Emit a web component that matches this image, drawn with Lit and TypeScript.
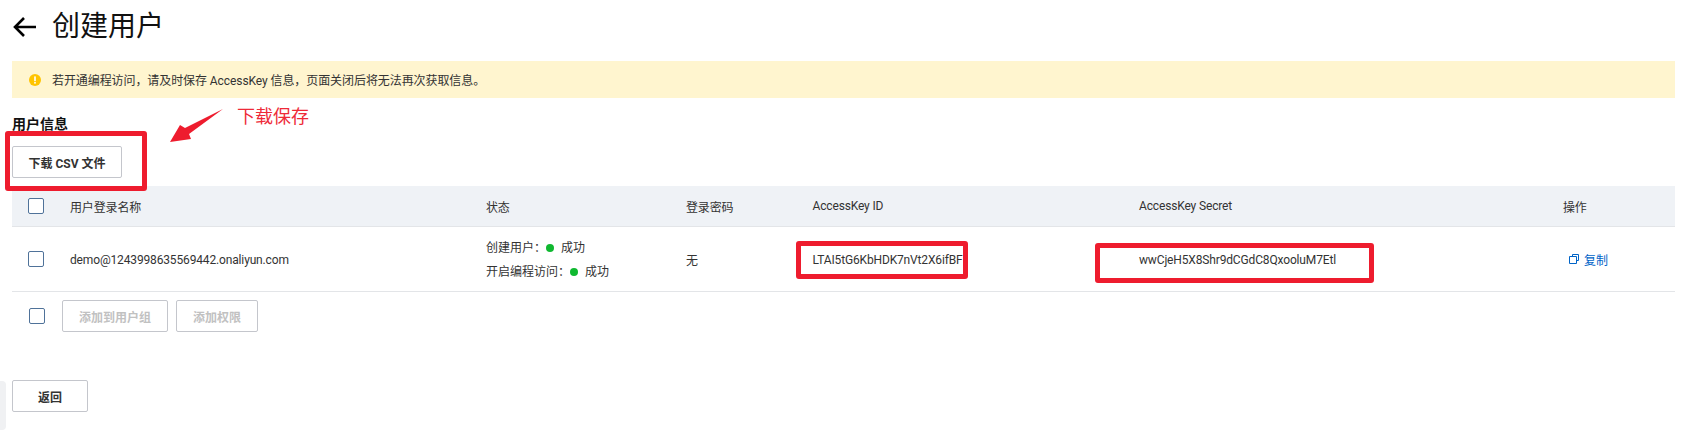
import { LitElement, html, css, svg } from "lit";
import { customElement } from "lit/decorators.js";

const columns = ["用户登录名称", "状态", "登录密码", "AccessKey ID", "AccessKey Secret", "操作"];

@customElement("app-root")
export class AppRoot extends LitElement {
  static styles = css`
    :host {
      display: block;
      position: relative;
      width: 1687px;
      height: 433px;
      overflow: hidden;
      background: #fff;
      color: #333;
      font-family: Roboto, "Noto Sans CJK SC", sans-serif;
      font-size: 12px;
    }
    .page { padding: 0 12px; display: flex; flex-direction: column; }
    .head { height: 54px; display: flex; align-items: center; gap: 16px; }
    .head svg { display: block; }
    .head h1 { margin: 0; font-size: 28px; font-weight: 400; color: #111; line-height: 40px; }
    .banner {
      margin-top: 7px; height: 37px; background: #fff5cf; letter-spacing: -0.08px;
      display: flex; align-items: center; gap: 11px; padding-left: 17px;
    }
    .banner svg { display: block; }
    h2 { margin: 16px 0 0; font-size: 14px; line-height: 20px; font-weight: 700; color: #111; }
    button {
      font: inherit; background: #fff; border: 1px solid #c4c6cc; border-radius: 2px;
      height: 32px; padding: 0; font-weight: 700; color: #333; box-sizing: border-box;
    }
    button:disabled { color: #c1c1c1; }
    .dl { margin-top: 12px; width: 110px; }
    .table { margin-top: 8px; display: grid; grid-template-columns: 58px 416px 200px 126.5px 326.5px 424px 1fr; }
    .th { height: 40px; background: #eff2f6; border-bottom: 1px solid #e3e5e8; display: flex; align-items: center; }
    .td { box-sizing: border-box; height: 65px; border-bottom: 1px solid #e3e5e8; display: flex; align-items: center; }
    .latin { letter-spacing: -0.15px; }
    .nudge { padding-top: 1px; }
    .check { padding-left: 16px; }
    .box { display: block; width: 14px; height: 14px; border: 1px solid #4f7299; border-radius: 2px; background: #fff; }
    .status { flex-direction: column; align-items: flex-start; justify-content: center; gap: 7px; padding-top: 2px; }
    .status div { display: flex; align-items: center; line-height: 17px; }
    .dot { width: 8px; height: 8px; border-radius: 50%; background: #0fb830; margin: 0 7px 0 0; }
    .action { padding-left: 6px; gap: 5px; color: #0064c8; }
    .foot { margin-top: 8px; display: flex; align-items: center; }
    .foot .box { margin: 0 17px 0 17px; }
    .foot button + button { margin-left: 8px; }
    .w1 { width: 106px; } .w2 { width: 82px; }
    .back { margin-top: 48px; width: 76px; }
    .mark { position: absolute; box-sizing: border-box; border: 5px solid #ee1c2e; border-radius: 3px; }
    .m1 { left: 5px; top: 131px; width: 142px; height: 60px; }
    .m2 { left: 796px; top: 241px; width: 172px; height: 38px; }
    .m3 { left: 1095px; top: 243px; width: 279px; height: 40px; }
    .note { position: absolute; left: 237px; top: 104px; font-size: 18px; line-height: 25px; color: #ee2a38; }
    .arrow { position: absolute; left: 165px; top: 104px; }
    .tab { position: absolute; left: 0; top: 381px; width: 6px; height: 49px; background: #f0f1f3; border-radius: 0 4px 4px 0; }
  `;

  private checkbox() {
    return html`<span class="box"></span>`;
  }

  render() {
    return html`
      <div class="page">
        <div class="head">
          <svg width="24" height="22" viewBox="0 0 24 22" fill="none" stroke="#000" stroke-width="2.6">
            ${svg`<path d="M24 11H3M12 2 3 11l9 9"/>`}
          </svg>
          <h1>创建用户</h1>
        </div>
        <div class="banner">
          <svg width="12" height="12" viewBox="0 0 12 12">
            ${svg`<circle cx="6" cy="6" r="6" fill="#ffc400"/><rect x="5.2" y="2.4" width="1.6" height="4.8" fill="#fff"/><rect x="5.2" y="8" width="1.6" height="1.6" fill="#fff"/>`}
          </svg>
          <span>若开通编程访问，请及时保存 AccessKey 信息，页面关闭后将无法再次获取信息。</span>
        </div>
        <h2>用户信息</h2>
        <button class="dl">下载 CSV 文件</button>
        <div class="table">
          <div class="th check">${this.checkbox()}</div>
          ${columns.map((c) => html`<div class="th latin">${c}</div>`)}
          <div class="td check">${this.checkbox()}</div>
          <div class="td latin nudge">demo@1243998635569442.onaliyun.com</div>
          <div class="td status">
            <div>创建用户：<span class="dot"></span>成功</div>
            <div>开启编程访问：<span class="dot"></span>成功</div>
          </div>
          <div class="td">无</div>
          <div class="td latin nudge">LTAI5tG6KbHDK7nVt2X6ifBF</div>
          <div class="td latin nudge">wwCjeH5X8Shr9dCGdC8QxooluM7Etl</div>
          <div class="td action">
            <svg width="10" height="10" viewBox="0 0 10 10" fill="none" stroke="#0064c8" stroke-width="1">
              ${svg`<path d="M3.5 2.5V.5h6v6h-2M.5 2.5h7v7h-7z"/>`}
            </svg>
            <span>复制</span>
          </div>
        </div>
        <div class="foot">
          ${this.checkbox()}
          <button class="w1" disabled>添加到用户组</button>
          <button class="w2" disabled>添加权限</button>
        </div>
        <button class="back">返回</button>
      </div>
      <div class="tab"></div>
      <div class="mark m1"></div>
      <div class="mark m2"></div>
      <div class="mark m3"></div>
      <svg class="arrow" width="62" height="42" viewBox="0 0 62 42">
        ${svg`<path d="M58 5 20 24 15 21 5 38 26 35 24 30Z" fill="#ee1c2e"/>`}
      </svg>
      <div class="note">下载保存</div>
    `;
  }
}
